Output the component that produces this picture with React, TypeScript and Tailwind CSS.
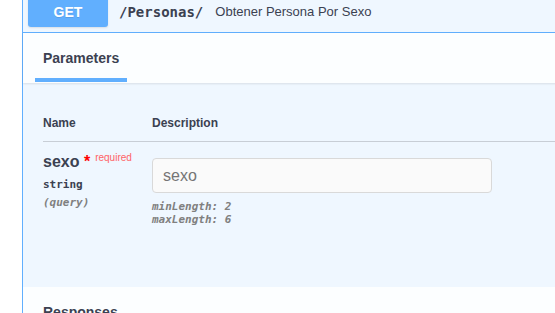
export default function App() {
  return (
    <div className="w-[555px] h-[313px] overflow-hidden bg-white flex items-start text-[#3b4151] font-['Liberation_Sans',Arial,sans-serif]">
      <div className="w-[22px] shrink-0" />
      <div className="w-[620px] shrink-0 mt-[-9px] border-l border-t border-[#61affe] bg-[#eff7ff] flex flex-col">
        {/* summary */}
        <div className="shrink-0 flex items-center p-[5px] border-b border-[#61affe]">
          <span className="w-[80px] h-[30px] rounded-[3px] bg-[#61affe] text-white text-[14px] font-bold flex items-center justify-center shadow-[0_1px_2px_rgba(0,0,0,0.1)] [text-shadow:0_1px_0_rgba(0,0,0,0.1)]">
            GET
          </span>
          <span className="pl-[11px] pr-[10px] text-[14px] font-bold font-['DejaVu_Sans_Mono',monospace] text-[#3b4151]">
            /Personas/
          </span>
          <span className="pl-[2px] text-[13px] text-[#3b4151]">Obtener Persona Por Sexo</span>
        </div>

        {/* tab header */}
        <div className="shrink-0 h-[50px] px-[20px] bg-[#fcfeff] shadow-[0_1px_2px_rgba(0,0,0,0.1)] relative z-10">
          <div className="flex flex-col items-start pt-[17px]">
            <h4 className="text-[14px] leading-[17px] font-bold">Parameters</h4>
            <div className="mt-[11px] ml-[-8px] w-[92px] h-[4px] bg-[#61affe]" />
          </div>
        </div>

        {/* parameters */}
        <div className="shrink-0 h-[204px] px-[20px] pt-[33px]">
          <div className="flex text-[12px] leading-[15px] font-bold pb-[10px] border-b border-[#c8ced6]">
            <div className="w-[109px]">Name</div>
            <div>Description</div>
          </div>
          <div className="flex">
            <div className="w-[109px] pt-[10px]">
              <div className="text-[16px] leading-[20px] font-bold">
                sexo<span className="text-[#ff0000]">&nbsp;*</span>
                <span className="relative top-[-6px] pl-[5px] text-[10px] font-normal text-[#ff6366]">required</span>
              </div>
              <div className="mt-[4px] text-[11px] leading-[14px] font-semibold text-[#3b4151] font-['DejaVu_Sans_Mono',monospace]">string</div>
              <div className="mt-[4px] text-[11px] leading-[14px] font-semibold italic text-[#808080] font-['DejaVu_Sans_Mono',monospace]">(query)</div>
            </div>
            <div className="pt-[16px]">
              <input
                placeholder="sexo"
                className="w-[340px] h-[35px] px-[10px] bg-[#fafafa] border border-[#d9d9d9] rounded-[4px] text-[16px] placeholder:text-[#757575] outline-none"
              />
              <div className="mt-[7px] text-[11px] leading-[13px] font-semibold italic text-[#808080] font-['DejaVu_Sans_Mono',monospace]">
                <div>minLength: 2</div>
                <div>maxLength: 6</div>
              </div>
            </div>
          </div>
        </div>

        {/* responses */}
        <div className="shrink-0 h-[60px] px-[20px] bg-[#fcfeff] pt-[17px]">
          <h4 className="text-[14px] leading-[17px] font-bold">Responses</h4>
        </div>
      </div>
    </div>
  );
}
